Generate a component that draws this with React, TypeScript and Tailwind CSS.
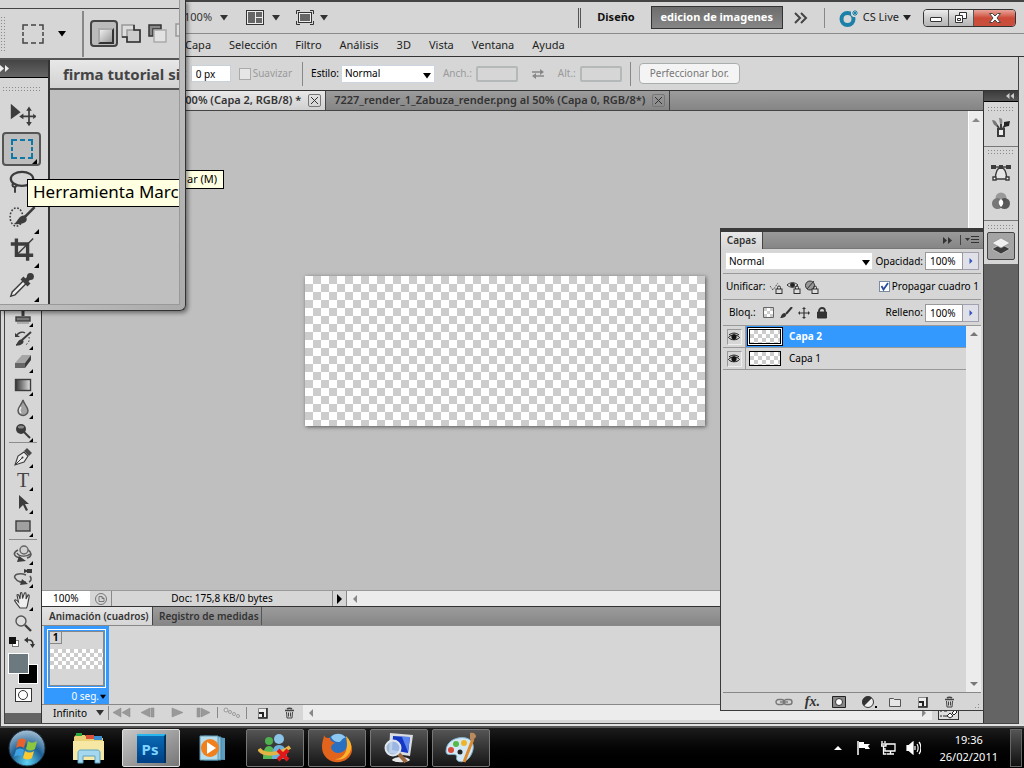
import type { ReactNode } from "react";

const menus = ["Capa", "Selección", "Filtro", "Análisis", "3D", "Vista", "Ventana", "Ayuda"];

const layers = [
  { name: "Capa 2", active: true },
  { name: "Capa 1", active: false },
];

type IconProps = { children: ReactNode; size?: number; className?: string };

function Icon({ children, size = 20, className = "" }: IconProps) {
  return (
    <svg
      viewBox="0 0 20 20"
      width={size}
      height={size}
      fill="none"
      stroke="#3c3c3c"
      strokeWidth="1.4"
      className={"shrink-0 " + className}
      aria-hidden="true"
    >
      {children}
    </svg>
  );
}

function Caret({ className = "" }: { className?: string }) {
  return (
    <svg viewBox="0 0 8 6" width="8" height="6" className={"shrink-0 " + className} aria-hidden="true">
      <path d="M0 0h8L4 5.5z" fill="currentColor" />
    </svg>
  );
}

function Arrow({ dir = "left", className = "" }: { dir?: "left" | "right" | "up" | "down"; className?: string }) {
  const d = {
    left: "M6 0v8L2 4z",
    right: "M2 0v8l4-4z",
    up: "M0 6h8L4 2z",
    down: "M0 2h8L4 6z",
  }[dir];
  return (
    <svg viewBox="0 0 8 8" width="8" height="8" className={"shrink-0 " + className} aria-hidden="true">
      <path d={d} fill="currentColor" />
    </svg>
  );
}

function Grip({ className = "" }: { className?: string }) {
  return (
    <div
      className={
        "bg-[radial-gradient(circle,#8a8a8a_1px,transparent_1px)] bg-[size:3px_3px] " + className
      }
    />
  );
}

/* ---------- toolbar ---------- */

const stamp = (
  <Icon>
    <path d="M10 4v6" strokeWidth="3" />
    <rect x="3" y="11" width="14" height="4" fill="#777" />
    <path d="M4 17h12" stroke="#999" />
  </Icon>
);
const historyBrush = (
  <Icon>
    <path d="M18 3 9 11" strokeWidth="2" />
    <path d="M3 16c2 0 2-5 6-5 2 2 0 5-6 5z" fill="#3c3c3c" />
    <path d="M12 4C9 2 5 4 4 6" />
    <path d="m2 4 0 4h5z" fill="#3c3c3c" stroke="none" />
    <path d="M16 8c1 4-1 7-4 8" strokeDasharray="1.5 2" strokeWidth="1" />
  </Icon>
);
const eraser = (
  <Icon>
    <path d="M2 11 9 3h9l-6 8z" fill="#a6a6a6" stroke="none" />
    <path d="M2 11h10v5H2z" fill="#666" stroke="none" />
    <path d="m12 11 6-8v5l-6 8z" fill="#3c3c3c" stroke="none" />
  </Icon>
);
const gradient = (
  <Icon>
    <defs>
      <linearGradient id="toolGrad">
        <stop stopColor="#333" />
        <stop offset="1" stopColor="#e4e4e4" />
      </linearGradient>
    </defs>
    <rect x="2.5" y="4.5" width="15" height="11" fill="url(#toolGrad)" />
  </Icon>
);
const drop = (
  <Icon>
    <path d="M10 2c1 4 5 7 5 10.500a5 5 0 0 1-10 0C5 9 9 6 10 2z" fill="#a3a3a3" stroke="#555" />
    <path d="M8 9c-2 3-1 5 0 6" stroke="#eee" />
  </Icon>
);
const dodge = (
  <Icon>
    <circle cx="8" cy="8" r="5" fill="#3a3a3a" stroke="none" />
    <ellipse cx="8" cy="6" rx="3" ry="1.500" fill="#888" stroke="none" />
    <path d="m11 11 6 6" strokeWidth="2" />
  </Icon>
);
const pen = (
  <Icon>
    <path d="M2 18 5 9l6-4 4 4-4 6z" fill="#ececec" strokeWidth="1.100" />
    <path d="m11 4 5 5 3-3-5-5z" fill="#4a4a4a" stroke="none" />
    <path d="m2 18 7-7" strokeWidth="1" />
    <circle cx="9.500" cy="10.500" r="1" fill="#333" stroke="none" />
  </Icon>
);
const pathArrow = (
  <Icon>
    <path d="M6 2v14l4-4 3 6 2-1-3-6h4z" fill="#3c3c3c" stroke="none" />
  </Icon>
);
const shape = (
  <Icon>
    <rect x="3" y="5" width="14" height="10" fill="#a0a0a0" />
  </Icon>
);
const rotate3d = (
  <Icon>
    <path d="M5 6C-1 9 1 13 8 14M15 6c5 3 3 7-1 8" stroke="#555" strokeWidth="1.600" />
    <path d="M4 9c2 4 10 4 13 1" stroke="#555" />
    <circle cx="11" cy="6" r="4" fill="#d0d0d0" stroke="#666" />
    <path d="m6 12 7 5-9 1z" fill="#3c3c3c" stroke="none" />
  </Icon>
);
const camera3d = (
  <Icon>
    <path d="M13 8C6 5 0 8 2 11c2 4 8 5 11 4M17 9c2 3 1 5-1 6" stroke="#555" strokeWidth="1.600" />
    <path d="m11 2 3 1V2h5v4h-5V5l-3 1z" fill="#3c3c3c" stroke="none" />
    <path d="m9 12 6 5-8 1z" fill="#3c3c3c" stroke="none" />
  </Icon>
);
const hand = (
  <Icon>
    <path
      d="M7 18C5 15 3 13 1.500 10.500c1-1.500 2.500 0 4 1.500L4 5c1-1.500 2 0 3 4L7.500 3c1-1.500 2 0 2 5.500L11.500 3c1.500-1 2 1 1.500 6l2-4c1.500-.5 1.500 1 .5 5S15 15 13.500 18z"
      fill="#eee"
      strokeWidth="1.100"
    />
  </Icon>
);
const zoomTool = (
  <Icon>
    <circle cx="8" cy="8" r="5" fill="#ddd" stroke="#555" />
    <path d="m12 12 6 6" strokeWidth="2.400" />
  </Icon>
);

function Tool({ label, children, more = true }: { label: string; children: ReactNode; more?: boolean }) {
  return (
    <button aria-label={label} className="relative flex h-[23px] w-full items-center justify-center">
      {children}
      {more && (
        <svg viewBox="0 0 4 4" width="4" height="4" className="absolute right-2 bottom-0">
          <path d="M4 0v4H0z" fill="#000" />
        </svg>
      )}
    </button>
  );
}

function Toolbar() {
  return (
    <aside className="flex w-[37px] shrink-0 flex-col border-r border-[#333] bg-[#646464]">
      <div className="flex flex-col bg-[#d6d6d6] pt-[213px] pb-[11px]">
        <Tool label="Tampón de clonar">{stamp}</Tool>
        <Tool label="Pincel de historia">{historyBrush}</Tool>
        <Tool label="Borrador">{eraser}</Tool>
        <Tool label="Degradado">{gradient}</Tool>
        <Tool label="Desenfocar">{drop}</Tool>
        <Tool label="Sobreexponer">{dodge}</Tool>
        <div className="mx-1 mb-0.5 h-px bg-[#8c8c8c]" />
        <Tool label="Pluma">{pen}</Tool>
        <Tool label="Texto">
          <span className="font-['Liberation_Serif',serif] text-xl leading-none text-[#444]">T</span>
        </Tool>
        <Tool label="Selección de trazado">{pathArrow}</Tool>
        <Tool label="Rectángulo">{shape}</Tool>
        <div className="mx-1 my-0.5 h-px bg-[#8c8c8c]" />
        <Tool label="Giro 3D">{rotate3d}</Tool>
        <Tool label="Cámara 3D">{camera3d}</Tool>
        <Tool label="Mano">{hand}</Tool>
        <Tool label="Zoom" more={false}>{zoomTool}</Tool>
        <div className="flex h-4 items-center justify-between pr-1.5 pl-1">
          <svg viewBox="0 0 10 10" width="10" height="10">
            <rect x="3.500" y="3.500" width="6" height="6" fill="#fff" stroke="#777" />
            <rect width="7" height="7" fill="#111" />
          </svg>
          <svg viewBox="0 0 11 11" width="11" height="11" fill="none" stroke="#333" strokeWidth="1.500">
            <path d="M2 3h3c3 0 4 2 4 5" />
            <path d="M4 0v6L0 3zM6 7h5l-2.500 4z" fill="#333" stroke="none" />
          </svg>
        </div>
        <div className="relative mx-[3px] mt-[3px] h-[31px]">
          <button aria-label="Color de fondo" className="absolute right-0 bottom-0 size-5 border border-white bg-black" />
          <button aria-label="Color frontal" className="absolute top-0 left-0 size-[21px] border border-white bg-[#6c797f]" />
        </div>
        <button
          aria-label="Máscara rápida"
          className="mx-auto mt-1 flex h-[14px] w-[17px] items-center justify-center border border-[#333] bg-white"
        >
          <span className="size-2.5 rounded-full border border-[#333]" />
        </button>
      </div>
    </aside>
  );
}

/* ---------- top bars ---------- */

function AppBar() {
  return (
    <header className="flex h-8 shrink-0 items-center border-b border-[#8a8a8a] pr-2 pl-[183px] text-[11px] text-[#333]">
      <span>100%</span>
      <Caret className="ml-2" />
      <button aria-label="Organizar documentos" className="ml-[18px] flex items-center gap-2">
        <svg viewBox="0 0 18 15" width="18" height="15">
          <rect x=".5" y=".5" width="17" height="14" fill="#eee" stroke="#333" />
          <path d="M2 2h7v11H2zM10 2h6v5h-6zM10 8h6v5h-6z" fill="#666" />
        </svg>
        <Caret />
      </button>
      <button aria-label="Modo de pantalla" className="ml-4 flex items-center gap-1.5">
        <svg viewBox="0 0 18 15" width="18" height="15">
          <rect x="2.500" y="2.500" width="13" height="10" fill="#eee" stroke="#333" />
          <path d="M4 4h10v7H4z" fill="#666" />
          <path d="M.5 4V.5H4M14 .5h3.500V4M17.500 11v3.500H14M4 14.500H.500V11" fill="none" stroke="#333" />
        </svg>
        <Caret />
      </button>
      <div className="ml-auto h-5 w-[3px] border-x border-[#555]" />
      <button className="ml-4 font-bold text-[#111]">Diseño</button>
      <button className="ml-4 h-[23px] w-[132px] border border-[#333] bg-linear-to-b from-[#6d6d6d] to-[#868686] font-bold whitespace-nowrap text-white">
        edicion de imagenes
      </button>
      <svg viewBox="0 0 14 12" width="14" height="12" className="ml-[11px]" fill="none" stroke="#444" strokeWidth="2">
        <path d="m1 1 5 5-5 5M7 1l5 5-5 5" />
      </svg>
      <div className="ml-4 h-5 w-px bg-[#888]" />
      <button className="ml-3.5 flex items-center gap-1 text-[#222]">
        <svg viewBox="0 0 20 18" width="20" height="18" fill="none">
          <circle cx="8.500" cy="10" r="6" stroke="#1c80a8" strokeWidth="4" />
          <path d="M16 0v8M12 4h8M13 1l6 6M19 1l-6 6" stroke="#d6d6d6" strokeWidth="3" />
          <path d="M16 1v6M13 4h6M14 2l4 4M18 2l-4 4" stroke="#1c80a8" />
        </svg>
        CS Live
        <Caret />
      </button>
      <div className="ml-3 flex h-[18px] w-[93px] shrink-0 overflow-hidden rounded border border-[#333]">
        <button aria-label="Minimizar" className="flex w-[25px] items-center justify-center border-r border-[#555] bg-linear-to-b from-[#eee] via-[#ccc] via-50% to-[#b5b5b5]">
          <span className="mt-1 h-[5px] w-3 rounded-[1px] border border-[#333] bg-white" />
        </button>
        <button aria-label="Restaurar" className="flex w-[25px] items-center justify-center border-r border-[#555] bg-linear-to-b from-[#eee] via-[#ccc] via-50% to-[#b5b5b5]">
          <svg viewBox="0 0 12 11" width="12" height="11" fill="#fff" stroke="#333">
            <path d="M4.500.5h7v6h-7z" />
            <path d="M.5 3.500h7v7h-7z" />
            <path d="M2.500 6.500h3v2h-3z" />
          </svg>
        </button>
        <button aria-label="Cerrar" className="flex flex-1 items-center justify-center bg-linear-to-b from-[#e8a49a] via-[#cc4a38] via-50% to-[#c8503c]">
          <svg viewBox="0 0 12 10" width="12" height="10">
            <path d="M.5.5h3L6 3 8.500.500h3L8 5l3.500 4.500h-3L6 7 3.500 9.500h-3L4 5z" fill="#fff" stroke="#444" />
          </svg>
        </button>
      </div>
    </header>
  );
}

function OptionsBar() {
  return (
    <div className="flex h-[34px] shrink-0 items-center border-b border-[#333] pl-[179px] text-[10px] text-black">
      <label htmlFor="feather">:</label>
      <input id="feather" defaultValue="0 px" className="ml-1 h-[17px] w-10 border border-[#c8d0d8] bg-white px-1" />
      <label className="ml-2 flex items-center gap-0.5 text-[#9a9a9a]">
        <input type="checkbox" className="size-3 appearance-none border border-[#aaa] bg-[#e6e6e6]" />
        Suavizar
      </label>
      <div className="ml-2.5 h-6 w-px bg-[#888]" />
      <label htmlFor="style" className="ml-2">Estilo:</label>
      <div className="relative ml-0.5">
        <select id="style" className="block h-[18px] w-[94px] appearance-none border border-[#cdd6e0] bg-white pl-[3px]">
          <option>Normal</option>
        </select>
        <Caret className="pointer-events-none absolute top-2 right-1" />
      </div>
      <label htmlFor="w" className="ml-2 text-[#9a9a9a]">Anch.:</label>
      <input id="w" className="ml-1 h-4 w-[42px] rounded-xs border-2 border-[#b4b8b8] bg-[#d6d6d6]" />
      <svg viewBox="0 0 12 10" width="12" height="10" className="ml-3.5" fill="none" stroke="#888" strokeWidth="1.500">
        <path d="M0 3h9M3 7h9" />
        <path d="M8 0v6l4-3zM4 4v6L0 7z" fill="#888" stroke="none" />
      </svg>
      <label htmlFor="h" className="ml-3.5 text-[#9a9a9a]">Alt.:</label>
      <input id="h" className="ml-1 h-4 w-[42px] rounded-xs border-2 border-[#b4b8b8] bg-[#d6d6d6]" />
      <div className="ml-2 h-6 w-px bg-[#888]" />
      <button className="ml-2 h-[21px] w-[101px] rounded-sm border border-[#a8adad] bg-[#f4f4f4] whitespace-nowrap text-[#777]">
        Perfeccionar bor.
      </button>
    </div>
  );
}

function CloseBox() {
  return (
    <button aria-label="Cerrar pestaña" className="flex size-[13px] items-center justify-center rounded-xs border border-[#777]">
      <svg viewBox="0 0 7 7" width="7" height="7" stroke="#333">
        <path d="m0 0 7 7M7 0 0 7" />
      </svg>
    </button>
  );
}

function DocTabs() {
  return (
    <div className="flex h-5 shrink-0 border-b border-[#444] bg-linear-to-b from-[#9c9c9c] to-[#858585] text-[11px] font-semibold text-[#333]">
      <div className="flex items-center justify-end gap-[7px] border-r border-[#444] bg-linear-to-b from-[#e8e8e8] to-[#d0d0d0] pr-1 pl-[137px] whitespace-nowrap">
        100% (Capa 2, RGB/8) *
        <CloseBox />
      </div>
      <div className="flex items-center gap-[7px] border-r border-[#444] pr-1 pl-2 whitespace-nowrap">
        7227_render_1_Zabuza_render.png al 50% (Capa 0, RGB/8*)
        <CloseBox />
      </div>
    </div>
  );
}

/* ---------- document + animation ---------- */

function StatusBar() {
  return (
    <div className="flex h-4 shrink-0 items-stretch border-t border-[#999] text-[10px] leading-[15px] text-black">
      <div className="w-12 bg-white pl-[11px]">100%</div>
      <div className="flex w-[22px] items-center justify-center border-r border-[#888]">
        <svg viewBox="0 0 12 12" width="12" height="12" fill="none" stroke="#777">
          <circle cx="6" cy="6" r="5.500" />
          <path d="M4 3.500h3l2 2v3H4zM7 3.500v2h2" />
        </svg>
      </div>
      <div className="w-[221px] border-r border-[#888] text-center">Doc: 175,8 KB/0 bytes</div>
      <div className="flex w-3.5 items-center justify-center border-r border-[#888]">
        <svg viewBox="0 0 6 10" width="6" height="10"><path d="M0 0v10l5-5z" /></svg>
      </div>
      <div className="flex flex-1 items-center bg-[#ececec] pl-1 text-[#888]">
        <Arrow />
      </div>
    </div>
  );
}

function AnimationPanel() {
  return (
    <section className="flex shrink-0 flex-col border-t border-[#333] pb-[3px]">
      <div className="flex h-[18px] bg-linear-to-b from-[#9c9c9c] to-[#868686] text-[10px] font-semibold whitespace-nowrap text-[#333]">
        <div className="flex w-[111px] items-center border-r border-[#444] bg-linear-to-b from-[#e4e4e4] to-[#d6d6d6] pl-[7px]">
          Animación (cuadros)
        </div>
        <div className="flex w-[109px] items-center border-r border-[#555] pl-1.5">Registro de medidas</div>
      </div>
      <div className="flex h-20 border-y border-[#888] pl-0.5">
        <button className="flex w-[65px] flex-col bg-[#3399ff] px-[3px] pt-[3px] text-[10px] text-white">
          <span className="relative flex h-[59px] w-full items-center border border-white bg-[#3399ff] p-px">
            <span className="flex size-full items-center border border-[#888] bg-[#d6d6d6]">
              <span className="h-5 w-full bg-[conic-gradient(#ccc_25%,#fff_0_50%,#ccc_0_75%,#fff_0)] bg-[size:8px_8px]" />
            </span>
            <span className="absolute top-0.5 left-0.5 size-[11px] bg-[#d6d6d6] text-center leading-[11px] font-bold text-black outline outline-[#888]">
              1
            </span>
          </span>
          <span className="flex w-full items-center justify-end gap-px pt-px">
            0 seg.
            <Caret className="h-2 w-1.5 text-black" />
          </span>
        </button>
      </div>
      <div className="flex h-[15px] items-center text-[#888]">
        <button className="flex w-[67px] items-center justify-between border-r border-[#888] pr-1 pl-[11px] text-[10px] leading-[14px] text-black">
          Infinito
          <Caret className="text-[#333]" />
        </button>
        <div className="flex w-[109px] items-center justify-between border-r border-[#888] pr-1 pl-1">
          {["M8 1v9L0 5.500zM17 1v9L9 5.500z", "M10 1v9L1 5.500zM11 1h3v9h-3z", "M4 1v9l11-4.500z", "M2 1h3v9H2zM6 1v9l9-4.500z"].map((d) => (
            <svg key={d} viewBox="0 0 18 11" width="18" height="11">
              <path d={d} fill="#999" stroke="#888" strokeWidth=".5" />
            </svg>
          ))}
        </div>
        <div className="flex w-[29px] justify-center border-r border-[#888]">
          <svg viewBox="0 0 18 12" width="18" height="12" fill="#ddd" stroke="#999">
            <circle cx="3" cy="3" r="2" />
            <circle cx="7" cy="5" r="1.500" />
            <circle cx="11" cy="7" r="1.500" />
            <circle cx="15" cy="9" r="1.500" />
          </svg>
        </div>
        <div className="flex w-14 items-center justify-between pr-2 pl-2.5">
          <NewIcon />
          <TrashIcon />
        </div>
        <div className="flex h-full flex-1 items-center justify-between bg-[#ececec] px-1">
          <Arrow />
          <Arrow dir="right" />
        </div>
        <button aria-label="Convertir en línea de tiempo" className="mr-6 ml-1.5 h-3.5 w-[21px] border border-[#333] bg-[#ddd]">
          <svg viewBox="0 0 19 12" width="19" height="12" stroke="#222" fill="#fff">
            <path d="M1 4h2M5 4h3M1 9h2M4 9h4" />
            <path d="m8 9 3-3 3 3-3 2zM13 6l3-3 2 2-3 3z" />
          </svg>
        </button>
      </div>
    </section>
  );
}

function NewIcon() {
  return (
    <svg viewBox="0 0 11 12" width="11" height="12" fill="#eee" stroke="#888">
      <path d="M1.500 1.500h8v9h-8z" />
      <path d="M2 5h5v5H5V7H2z" fill="#222" stroke="none" />
      <path d="M10 1v10H1" stroke="#222" strokeWidth="1.500" fill="none" />
    </svg>
  );
}

function TrashIcon() {
  return (
    <svg viewBox="0 0 11 12" width="11" height="12" fill="none" stroke="#444">
      <path d="M1 3.500h9M3 2c1-1 4-1 5 0" strokeWidth="1.500" />
      <path d="M2.500 5 3 11h5l.5-6M4.500 5.500v4M6.500 5.500v4" />
    </svg>
  );
}

/* ---------- right dock ---------- */

function Dock() {
  return (
    <aside className="flex w-[35px] shrink-0 flex-col border-l border-[#333] bg-[#646464]">
      <div className="flex h-[11px] items-center justify-end border-b border-black bg-linear-to-b from-[#3c3c3c] to-[#555] pr-1 text-[#ccc]">
        <svg viewBox="0 0 8 6" width="8" height="6"><path d="M3.500 0v6L0 3zM8 0v6L4.500 3z" fill="currentColor" /></svg>
      </div>
      <div className="flex h-[45px] flex-col items-center gap-1.5 border-b border-[#777] bg-[#d6d6d6] pt-1">
        <Grip className="h-[6px] w-7 shrink-0" />
        <Icon>
          <path d="M7 11h6v7H7z" fill="#eee" strokeWidth="2" />
          <path d="M10 10V3M8 10 4 5M12 10l4-5" strokeWidth="2" />
          <path d="M1 2c4 0 5 3 5 6-3 0-4-3-5-6z" fill="#777" stroke="none" />
          <path d="M8 0c3 0 4 2 3 6H9z" fill="#888" stroke="none" />
          <path d="m13 4 6-1-1 5-5 1z" fill="#222" stroke="none" />
        </Icon>
      </div>
      <div className="flex h-[74px] flex-col items-center gap-2 border-b border-[#777] bg-[#d6d6d6] pt-0.5">
        <Grip className="h-[6px] w-7 shrink-0" />
        <Icon>
          <path d="M4 16C5 9 6 5 10 4c4 1 5 5 6 12z" fill="#e6e6e6" />
          <path d="M1 4h18" />
          <path d="M0 2h5v4H0zM8 2h4v4H8zM15 2h5v4h-5z" fill="#3c3c3c" stroke="none" />
          <path d="M2 14h3v3H2zM15 14h3v3h-3z" fill="#fff" />
        </Icon>
        <Icon>
          <g stroke="none">
            <circle cx="10" cy="7" r="5.500" fill="#999" />
            <circle cx="6.500" cy="12.500" r="5.500" fill="#777" />
            <circle cx="13.500" cy="12.500" r="5.500" fill="#444" fillOpacity=".85" />
            <path d="M10 8c3 2 3 5 0 8-3-3-3-6 0-8z" fill="#fff" />
          </g>
        </Icon>
      </div>
      <div className="flex h-[43px] flex-col items-center gap-0.5 bg-[#d6d6d6] pt-[3px]">
        <Grip className="h-[6px] w-7 shrink-0" />
        <button aria-label="Capas" className="flex size-7 shrink-0 items-center justify-center rounded-xs border border-[#444] bg-[#a4a4a4]">
          <Icon>
            <path d="m1 13 9-5 9 5-9 5z" fill="#3c3c3c" stroke="#ddd" strokeWidth=".6" />
            <path d="m1 7 9-5 9 5-9 5z" fill="#f0f0f0" stroke="#888" strokeWidth=".6" />
          </Icon>
        </button>
      </div>
    </aside>
  );
}

/* ---------- layers ---------- */

function Lock({ x = 8 }: { x?: number }) {
  return (
    <g>
      <path d={`M${x + 1.5} 9V7.500a1.500 1.500 0 0 1 3 0V9`} />
      <rect x={x} y="9" width="6" height="4.500" fill="#ddd" />
    </g>
  );
}

function Percent({ id, label }: { id: string; label: string }) {
  return (
    <div className="ml-auto flex items-center gap-0.5">
      <label htmlFor={id}>{label}</label>
      <div className="flex">
        <input id={id} defaultValue="100%" className="h-[18px] w-[38px] border border-[#999] bg-white pl-1" />
        <button aria-label={label} className="flex w-4 items-center justify-center border border-l-0 border-[#a0a0b0] bg-[#e0e0e8] text-[#3355bb]">
          <Arrow dir="right" className="size-1.5" />
        </button>
      </div>
    </div>
  );
}

function Eye() {
  return (
    <svg viewBox="0 0 12 10" width="12" height="10" fill="none" stroke="#111">
      <path d="M.5 5.500C3 2 9 2 11.500 5.500 9 8.500 3 8.500.500 5.500zM1 3C4 .500 8 .500 11 3" />
      <circle cx="6" cy="5" r="2.200" fill="#111" />
    </svg>
  );
}

function LayersPanel() {
  return (
    <section className="absolute top-[226px] right-[40px] bottom-4 z-10 flex w-[264px] flex-col border border-t-4 border-[#3a3a3a] bg-[#d6d6d6] text-[10px] text-black">
      <div className="flex h-[17px] shrink-0 items-center border-b border-[#777] bg-linear-to-b from-[#9a9a9a] to-[#868686] pr-1">
        <div className="flex h-[17px] w-[42px] items-center justify-center border-r border-[#444] bg-linear-to-b from-[#e8e8e8] to-[#d6d6d6] font-semibold text-[#333]">
          Capas
        </div>
        <svg viewBox="0 0 9 7" width="9" height="7" className="ml-auto" fill="#333"><path d="M0 0v7l4-3.500zM5 0v7l4-3.500z" /></svg>
        <div className="mr-1 ml-2 h-2.5 w-px bg-[#444]" />
        <svg viewBox="0 0 14 8" width="14" height="8" stroke="#333"><path d="M6 .500h8M6 3.500h8M6 6.500h8" /><path d="M0 2h5L2.500 5z" fill="#333" stroke="none" /></svg>
      </div>
      <div className="mx-0.5 flex h-[25px] shrink-0 items-center border-b border-[#999] pr-0.5 pl-0.5">
        <div className="relative">
          <select aria-label="Modo de fusión" className="block h-[18px] w-[148px] appearance-none border border-[#d8d8d8] bg-white pl-[3px]">
            <option>Normal</option>
          </select>
          <Caret className="pointer-events-none absolute top-2 right-[3px]" />
        </div>
        <Percent id="opacity" label="Opacidad:" />
      </div>
      <div className="mx-0.5 flex h-[26px] shrink-0 items-center border-b border-[#999] pr-0.5 pl-[3px]">
        Unificar:
        <svg viewBox="0 0 52 14" width="52" height="14" className="ml-1" fill="none" stroke="#333">
          <path d="M1 6l3 4 5-7" strokeDasharray="1 1" />
          <Lock x={7} />
          <path d="M18 5c3-3 8-3 11 0-3 3-8 3-11 0z" />
          <circle cx="23.500" cy="5" r="2" fill="#222" />
          <Lock x={25} />
          <circle cx="41" cy="5.500" r="4.500" fill="#999" />
          <path d="m38 9 7-8" />
          <Lock x={43} />
        </svg>
        <label className="ml-auto flex items-center gap-0.5">
          <span className="relative size-[11px]">
            <input type="checkbox" defaultChecked className="block size-[11px] appearance-none border border-[#7a8ca0] bg-white" />
            <svg viewBox="0 0 11 11" className="pointer-events-none absolute inset-0" fill="none" stroke="#2b4ca0" strokeWidth="1.800">
              <path d="m2.500 5 2 3.500L9 2" />
            </svg>
          </span>
          Propagar cuadro 1
        </label>
      </div>
      <div className="mx-0.5 flex h-[26px] shrink-0 items-center border-b border-[#999] pr-0.5 pl-1.5">
        Bloq.:
        <svg viewBox="0 0 68 12" width="68" height="12" className="ml-1.5" fill="none" stroke="#333">
          <path d="M1.500.5h10v10h-10z" fill="#fff" stroke="#666" />
          <path d="M2 1h3v3H2zM8 1h3v3H8zM5 4h3v3H5zM2 7h3v3H2zM8 7h3v3H8z" fill="#ccc" stroke="none" />
          <path d="m30 0-6 7" strokeWidth="2" />
          <path d="M18 11c1 0 1-5 5-5 3 3-1 5-5 5z" fill="#333" stroke="none" />
          <path d="M42 1v10M37 6h10" strokeWidth="1.200" />
          <path d="m42 0 2 2h-4zM42 12l2-2h-4zM36 6l2-2v4zM48 6l-2-2v4z" fill="#333" stroke="none" />
          <path d="M57 5V4a3 3 0 0 1 6 0v1" strokeWidth="1.800" />
          <path d="M55.500 5h9v6h-9z" fill="#333" />
        </svg>
        <Percent id="fill" label="Relleno:" />
      </div>
      <div className="mx-0.5 flex flex-1">
        <ul className="flex-1">
          {layers.map((l) => (
            <li key={l.name} className="flex h-[22px] items-stretch border-b border-[#999]">
              <div className="flex w-[23px] items-center justify-center border-r border-[#999]">
                <button
                  aria-label="Visibilidad"
                  className="flex h-4 w-[15px] items-center justify-center border border-t-[#999] border-r-[#eee] border-b-[#eee] border-l-[#999]"
                >
                  <Eye />
                </button>
              </div>
              <div className={l.active ? "flex flex-1 items-center bg-[#3399ff] pl-px" : "flex flex-1 items-center pl-px"}>
                <span className={l.active ? "border border-black bg-white p-px" : "border border-transparent p-px"}>
                  <span className="block h-[15px] w-8 border border-black bg-[conic-gradient(#ccc_25%,#fff_0_50%,#ccc_0_75%,#fff_0)] bg-[size:8px_8px]" />
                </span>
                <span className={l.active ? "pl-1.5 font-bold text-white" : "pl-1.5"}>{l.name}</span>
              </div>
            </li>
          ))}
        </ul>
        <div className="flex w-[15px] flex-col items-center justify-between bg-[#ececec] py-1 text-[#777]">
          <Arrow dir="up" />
          <Arrow dir="down" />
        </div>
      </div>
      <div className="mx-0.5 flex h-[18px] shrink-0 items-center justify-end gap-4 border-t border-[#888]">
        <svg viewBox="0 0 18 8" width="18" height="8" fill="none" stroke="#777" strokeWidth="1.400">
          <rect x="1" y="1.500" width="8" height="5" rx="2.500" />
          <rect x="9" y="1.500" width="8" height="5" rx="2.500" />
          <path d="M5 4h8" />
        </svg>
        <span className="-mx-1 font-['Liberation_Serif',serif] text-sm leading-none font-bold italic text-[#333]">fx.</span>
        <svg viewBox="0 0 14 12" width="14" height="12"><path d="M.5.5h13v11H.500z" fill="#888" stroke="#222" /><circle cx="7" cy="6" r="3.500" fill="#fff" stroke="#333" /></svg>
        <svg viewBox="0 0 15 12" width="15" height="12"><circle cx="6" cy="6" r="5.500" fill="#eee" stroke="#333" /><path d="M2 10A5.500 5.500 0 0 1 10 2z" fill="#333" /><path d="M13 10h2v2h-2z" /></svg>
        <svg viewBox="0 0 12 10" width="12" height="10" className="-ml-1"><path d="M.5 1.500h4l1 1h6v7H.500z" fill="#e6e6e6" stroke="#555" /></svg>
        <NewIcon />
        <TrashIcon />
        <Grip className="h-2.5 w-2.5 self-end [clip-path:polygon(100%_0,100%_100%,0_100%)]" />
      </div>
    </section>
  );
}

/* ---------- magnifier ---------- */

function LensTool({ label, active, children }: { label: string; active?: boolean; children: ReactNode }) {
  return (
    <button
      aria-label={label}
      className={
        active
          ? "relative mx-0.5 flex h-[34px] w-[39px] items-center justify-center rounded border-2 border-[#555] bg-[#bdbdbd]"
          : "relative mx-0.5 flex h-[34px] w-[39px] items-center justify-center"
      }
    >
      {children}
    </button>
  );
}

function Corner() {
  return (
    <svg viewBox="0 0 5 5" width="5" height="5" className="absolute right-0.5 bottom-0">
      <path d="M5 0v5H0z" />
    </svg>
  );
}

function Magnifier() {
  return (
    <div className="absolute top-0 left-0 z-20 h-[311px] w-[186px] rounded-br-md border-r border-b border-[#333] bg-linear-to-br from-[#ddd] to-[#aaa] pr-[5px] pb-[5px] shadow-[2px_2px_4px_rgba(0,0,0,0.45)]">
      <div className="relative flex h-full flex-col overflow-hidden border-r border-b border-[#999] bg-[#d6d6d6]">
        <div className="h-[9px] shrink-0 border-b border-[#444]" />
        <div className="flex h-[51px] shrink-0 items-center border-b-2 border-[#555]">
          <Grip className="h-9 w-[6px] shrink-0" />
          <svg viewBox="0 0 22 20" width="22" height="20" className="ml-4 shrink-0">
            <path d="M1 6V1h5M9 1h5M17 1h4v5M21 8v4M21 14v5h-4M14 19H9M6 19H1v-5M1 12V8" fill="none" stroke="#444" strokeWidth="1.500" />
          </svg>
          <Caret className="ml-3.5" />
          <div className="mr-1.5 ml-4 h-[46px] w-0.5 shrink-0 bg-[#888]" />
          <button aria-label="Selección nueva" className="flex h-[27px] w-7 shrink-0 items-center justify-center rounded border-2 border-[#444] bg-[#bbb]">
            <span className="mt-1 ml-1 size-4 border-2 border-t-[#aaa] border-l-[#aaa] border-[#333] bg-linear-to-br from-[#eee] to-[#999]" />
          </button>
          <svg viewBox="0 0 60 22" width="60" height="22" className="ml-0.5 shrink-0" strokeWidth="1.500">
            <path d="M2 2h12v12H2z" fill="#ddd" stroke="#999" />
            <path d="M7 7h13v12H7z" fill="#ccc" stroke="#999" />
            <path d="M14 2v5h6v12H7v-5H2" fill="none" stroke="#333" strokeWidth="1.600" />
            <path d="M29 13V2h12v4h-8v7z" fill="#888" stroke="#333" />
            <path d="M34 7h12v12H34z" fill="#e2e2e2" stroke="#aaa" />
            <path d="M56 1h8v12h-8z" fill="#ddd" stroke="#999" />
          </svg>
        </div>
        <div className="flex flex-1">
          <div className="flex w-[50px] shrink-0 flex-col border-r-2 border-[#333]">
            <div className="mb-2 flex h-[18px] items-center border-b border-black bg-linear-to-b from-[#444] to-[#666]">
              <svg viewBox="0 0 10 7" width="10" height="7" fill="#eee"><path d="M0 0v7l4-3.500zM5 0v7l4-3.500z" /></svg>
            </div>
            <Grip className="mb-1.5 ml-0.5 h-[6px] w-10" />
            <LensTool label="Mover">
              <Icon size={28}>
                <path d="M2 2v11l7-5z" fill="#3c3c3c" stroke="none" />
                <path d="M15 6v10M10 11h10" strokeWidth="1.200" />
                <path d="m15 4 2 3h-4zM15 18l2-3h-4zM8 11l3-2v4zM20 11l-2-2v4z" fill="#3c3c3c" stroke="none" />
              </Icon>
            </LensTool>
            <LensTool label="Marco rectangular" active>
              <svg viewBox="0 0 22 20" width="22" height="20">
                <path d="M1 6V1h5M9 1h5M17 1h4v5M21 8v4M21 14v5h-4M14 19H9M6 19H1v-5M1 12V8" fill="none" stroke="#0f76a8" strokeWidth="2" />
              </svg>
              <Corner />
            </LensTool>
            <LensTool label="Lazo">
              <Icon size={28}>
                <ellipse cx="10" cy="7" rx="8" ry="5" strokeWidth="1.600" />
                <path d="M4 10c-3 3 3 4 2 1M5 13v4" />
              </Icon>
            </LensTool>
            <LensTool label="Selección rápida">
              <Icon size={28}>
                <ellipse cx="6" cy="10" rx="4.500" ry="6.500" strokeDasharray="1.200 1.200" strokeWidth="1.100" />
                <path d="m19 3-7 7" strokeWidth="1.800" />
                <path d="M4 15c3-1 3-6 8-6 4 4-1 7-8 6z" fill="#3c3c3c" stroke="none" />
              </Icon>
              <Corner />
            </LensTool>
            <LensTool label="Recortar">
              <Icon size={28}>
                <path d="M6 1v12h12M2 5h12v12" strokeWidth="2.400" />
                <path d="m7 12 11-11" strokeWidth="1" />
              </Icon>
              <Corner />
            </LensTool>
            <LensTool label="Cuentagotas">
              <Icon size={28}>
                <path d="m11 7-8 8-1 3 3-1 8-8" fill="#eee" strokeWidth="1" />
                <path d="m10 5 5 5M12 8l4-4" strokeWidth="3" />
                <circle cx="16" cy="4" r="2.500" fill="#3c3c3c" stroke="none" />
              </Icon>
              <Corner />
            </LensTool>
          </div>
          <div className="flex-1 bg-[#bfbfbf]">
            <div className="h-[30px] overflow-hidden border-b-2 border-[#555] bg-linear-to-b from-[#e8e8e8] to-[#d2d2d2] pl-[13px] text-[15px] leading-7 font-bold whitespace-nowrap text-[#444]">
              firma tutorial si
            </div>
          </div>
        </div>
        <div className="absolute top-[179px] left-[27px] h-7 w-[160px] overflow-hidden border border-black bg-[#ffffe1] pl-[5px] text-[17px] leading-[24px] whitespace-nowrap text-black">
          Herramienta Marc
        </div>
      </div>
    </div>
  );
}

/* ---------- taskbar ---------- */

function TaskButton({ label, tone = "idle", children }: { label: string; tone?: "plain" | "idle" | "active"; children: ReactNode }) {
  const tones = {
    plain: "border-transparent",
    idle: "border-[#777] bg-linear-to-b from-[#555] to-[#161616]",
    active: "border-[#ddd] bg-linear-to-br from-[#c8c8c8] to-[#777]",
  };
  return (
    <button aria-label={label} className={"flex h-[38px] w-[58px] shrink-0 items-center justify-center rounded-xs border " + tones[tone]}>
      {children}
    </button>
  );
}

function Taskbar() {
  return (
    <footer className="flex h-[41px] shrink-0 items-center border-t border-[#555] bg-linear-to-b from-[#1c1c1c] to-black pr-0.5 pl-[8px] text-white">
      <button aria-label="Inicio" className="shrink-0">
        <svg viewBox="0 0 38 38" width="38" height="38">
          <defs>
            <radialGradient id="orb" cx=".5" cy=".9" r=".9">
              <stop stopColor="#5fd4f4" />
              <stop offset=".5" stopColor="#1d5f93" />
              <stop offset="1" stopColor="#a9c3d6" />
            </radialGradient>
          </defs>
          <circle cx="19" cy="19" r="18" fill="url(#orb)" stroke="#234" />
          <path d="M10 11c3-2 5-2 8 0l-2 8c-3-2-5-2-8 0z" fill="#e8632b" />
          <path d="M20 12c3 2 5 2 9 0l-2 8c-3 2-6 2-9 0z" fill="#8cc63e" />
          <path d="M8 21c3-2 5-2 8 0l-2 7c-3-2-5-2-8 0z" fill="#3fa1e0" />
          <path d="M17 22c3 2 6 2 9 0l-2 7c-3 2-6 2-9 0z" fill="#fcc92f" />
        </svg>
      </button>
      <div className="ml-[14px] flex gap-1">
        <TaskButton label="Explorador" tone="plain">
          <svg viewBox="0 0 34 32" width="34" height="32">
            <path d="M2 5 4 3h9l2 3h16v22H2z" fill="#e9cf75" />
            <path d="M4 1h6v3H4z" fill="#29a63c" />
            <path d="M14 3h8v4h-8z" fill="#d9503a" />
            <path d="M22 4h8v4h-8z" fill="#3b8fd0" />
            <path d="M1 9h31v19H1z" fill="#f7e7a4" />
            <path d="M6 31V21c0-2 1-3 3-3h16c2 0 3 1 3 3v10h-5v-7H11v7z" fill="#a5d8ee" stroke="#5ba3c4" />
          </svg>
        </TaskButton>
        <TaskButton label="Photoshop" tone="active">
          <span className="flex size-[29px] items-center justify-center border-t-2 border-r-2 border-t-[#29b6ec] border-r-[#00335c] bg-linear-to-b from-[#0a6ab4] to-[#003f85] text-[15px] leading-none font-bold text-[#7fd4ff]">
            Ps
          </span>
        </TaskButton>
        <TaskButton label="Reproductor" tone="plain">
          <svg viewBox="0 0 28 26" width="28" height="26">
            <path d="m8 1 18 2v22L8 24z" fill="#5c9cc0" />
            <path d="m5 1 17 1v23H5z" fill="#8fc4dd" stroke="#4a88a8" />
            <path d="M1 1h18v24H1z" fill="#b9dcea" stroke="#5d9cba" />
            <circle cx="11" cy="13" r="9" fill="#f07f1e" />
            <path d="M8 7v12l9-6z" fill="#fff" />
          </svg>
        </TaskButton>
        <TaskButton label="Messenger">
          <svg viewBox="0 0 34 28" width="34" height="28">
            <circle cx="11" cy="7" r="4" fill="#4fb04f" />
            <path d="M5 25c0-9 2-13 6-13s6 4 6 13z" fill="#55b955" />
            <circle cx="21" cy="5" r="5" fill="#8cc4e8" />
            <path d="M14 25c0-10 2-14 7-14s8 4 8 14z" fill="#6db0dc" />
            <path d="M1 15c4 7 20 6 31-2" fill="none" stroke="#e2b545" strokeWidth="4" />
            <path d="m20 16 10 10M30 16 20 26" stroke="#e01818" strokeWidth="4" />
          </svg>
        </TaskButton>
        <TaskButton label="Firefox">
          <svg viewBox="0 0 32 32" width="32" height="32">
            <circle cx="17" cy="15" r="13" fill="#2b6fc0" />
            <path d="M10 5c4-5 12-4 15 1-4-1-4 4-7 4s-6-1-8-5z" fill="#8cc8f0" />
            <path d="M3 3c1 3 3 3 6 3 0 3 3 4 5 5-2 1-4 2-4 5 2 6 9 6 13 3 4-3 4-8 2-13 8 6 8 16 1 21C17 34 1 29 1 15 1 9 3 6 3 3z" fill="#e2631b" />
            <path d="M25 4c8 8 6 16 0 21-4 3-8 3-11 2 10 0 14-10 11-23z" fill="#f9b42c" />
          </svg>
        </TaskButton>
        <TaskButton label="Lupa">
          <svg viewBox="0 0 30 32" width="30" height="32">
            <path d="m6 1 23 2-3 21L5 21z" fill="#d9dde2" />
            <path d="m9 4 17 1-2 16L8 18z" fill="#1438c4" />
            <path d="m18 5 8 0-2 15z" fill="#5c84ee" />
            <path d="M8 28c2-4 16-4 18 0-2 3-16 3-18 0z" fill="#e6e6e6" />
            <path d="m14 21 8 9" stroke="#9c6a40" strokeWidth="4" />
            <circle cx="9" cy="16" r="7.500" fill="#b4ccea" fillOpacity=".85" stroke="#dfe6ee" strokeWidth="2" />
          </svg>
        </TaskButton>
        <TaskButton label="Paint">
          <svg viewBox="0 0 34 32" width="34" height="32">
            <path d="M2 19C2 9 13 4 22 6c8 2 9 10 5 17-3 6-9 8-13 6-3-2 0-5-2-6-3-2-10 2-10-4z" fill="#d3e8f5" stroke="#7fb0cc" />
            <circle cx="7" cy="18" r="3" fill="#d94a3a" />
            <circle cx="12" cy="12" r="3" fill="#57b947" />
            <circle cx="20" cy="11" r="3" fill="#f0b429" />
            <circle cx="16" cy="20" r="2.500" fill="#222" />
            <path d="m29 7-9 23" stroke="#dd8a2e" strokeWidth="3" />
            <path d="M26 1c4-1 6 1 6 4l-4 4-2-2z" fill="#b98a5c" />
          </svg>
        </TaskButton>
      </div>
      <div className="ml-auto flex items-center gap-2.5">
        <Arrow dir="up" />
        <svg viewBox="0 0 15 14" width="15" height="14" className="ml-1"><path d="M2 0v14" stroke="#fff" strokeWidth="1.500" /><path d="M3 1h5v2h6l-2 2 2 3H9V7H3z" fill="#fff" /></svg>
        <svg viewBox="0 0 15 14" width="15" height="14" fill="none" stroke="#fff" strokeWidth="1.300"><path d="M5 3h9v7H4V7M6 13h7M9.500 10v3M1 0v2M4 0v2M0 3h5v2H0zM2.500 5v8h3" /></svg>
        <svg viewBox="0 0 15 14" width="15" height="14" fill="none" stroke="#fff" strokeWidth="1.200"><path d="M1 4.500h2L7 1v12L3 9.500H1z" fill="#fff" /><path d="M9 5v4M11 3c1.500 2 1.500 6 0 8M13 1c2.500 3 2.500 9 0 12" /></svg>
      </div>
      <div className="ml-[18px] text-center text-[11px] leading-[17px]">
        <div>19:36</div>
        <div>26/02/2011</div>
      </div>
      <button aria-label="Mostrar escritorio" className="ml-3 h-[38px] w-3 border border-[#666] bg-linear-to-b from-[#555] to-[#111]" />
    </footer>
  );
}

export default function App() {
  return (
    <div className="relative flex h-screen min-h-[768px] flex-col overflow-hidden bg-[#d6d6d6] font-['Noto_Sans',sans-serif]">
      <div className="relative flex flex-1 flex-col border-t-2 border-l border-[#444]">
        <AppBar />
        <nav className="flex h-[23px] shrink-0 items-center gap-[18px] border-b border-[#333] pl-[184px] text-[11px] text-[#222]">
          {menus.map((m) => (
            <a key={m} href="#" className="whitespace-nowrap">{m}</a>
          ))}
        </nav>
        <div className="mr-[5px] ml-[3px] flex flex-1 flex-col border-r border-b border-l border-[#444]">
          <OptionsBar />
          <div className="flex flex-1">
            <Toolbar />
            <main className="flex min-w-0 flex-1 flex-col">
              <DocTabs />
              <div className="flex flex-1 bg-[#bfbfbf]">
                <div className="flex flex-1 items-center justify-center">
                  <div className="h-[150px] w-[400px] bg-[conic-gradient(#ccc_25%,#fff_0_50%,#ccc_0_75%,#fff_0)] bg-[size:16px_16px] shadow-[1px_1px_4px_rgba(0,0,0,0.55)]" />
                </div>
                <div className="flex w-[15px] justify-center border-l border-white bg-[#ececec] pt-[5px] text-[#888]">
                  <Arrow dir="up" />
                </div>
              </div>
              <StatusBar />
              <AnimationPanel />
            </main>
            <Dock />
          </div>
        </div>
        <div className="h-[3px] shrink-0 border-b border-[#555] bg-[#e0e0e0]" />
        <LayersPanel />
      </div>
      <Taskbar />
      <div className="absolute top-[170px] left-[180px] z-10 flex h-[19px] items-center border border-black bg-[#ffffe1] pr-1.5 pl-[6px] text-[11px] text-black">
        ar (M)
      </div>
      <Magnifier />
    </div>
  );
}
